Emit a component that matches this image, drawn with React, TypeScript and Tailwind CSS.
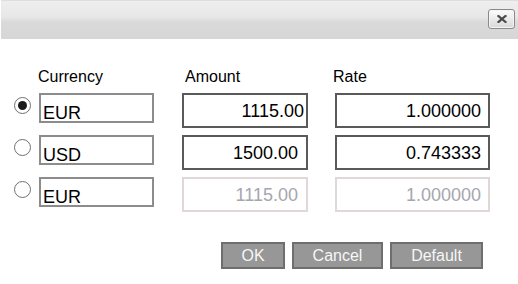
import React from "react";

const font = { fontFamily: '"Liberation Sans", Arial, sans-serif' };

function Radio({ checked }: { checked?: boolean }) {
  return (
    <div className="mt-[4px] flex h-[17px] w-[17px] shrink-0 items-center justify-center rounded-full border border-[#707070] bg-white">
      {checked && <div className="h-[9px] w-[9px] rounded-full bg-[#1a1a1a]" />}
    </div>
  );
}

function Currency({ value }: { value: string }) {
  return (
    <div className="box-border h-[30px] w-[115px] shrink-0 border-2 border-[#8c8c8c] pl-[2px] pt-[9px] text-[18px] leading-[18px] text-black">
      {value}
    </div>
  );
}

function Num({
  value,
  w,
  pr,
  disabled,
}: {
  value: string;
  w: string;
  pr: string;
  disabled?: boolean;
}) {
  return (
    <div
      className={`box-border flex h-[35px] shrink-0 items-center justify-end border-2 pt-px text-[18px] leading-[18px] ${w} ${pr} ${
        disabled ? "border-[#e0d8d8] text-[#a6a6ae]" : "border-[#5a5a5a] text-black"
      }`}
    >
      {value}
    </div>
  );
}

function Btn({ label, w }: { label: string; w: string }) {
  return (
    <button
      className={`box-border h-[27px] ${w} border-2 border-[#6e6e6e] bg-[#979797] text-[16px] leading-[16px] text-[#f6f6f6]`}
    >
      {label}
    </button>
  );
}

export default function App() {
  return (
    <div className="h-[284px] w-[518px] overflow-hidden bg-white" style={font}>
      <div className="ml-px flex h-[39px] items-start justify-end border-t border-[#dedede] bg-[linear-gradient(to_bottom,#eeeeee_0%,#e8e8e8_40%,#dadada_55%,#d6d6d6_100%)] pr-[3px] pt-[8px]">
        <button className="flex h-[20px] w-[27px] items-center justify-center rounded-[3px] border border-[#8a8a8a] bg-[linear-gradient(to_bottom,#fdfdfd,#d8d8d8)] shadow-[inset_0_0_0_1px_#f4f4f4]">
          <svg width="10" height="8" viewBox="0 0 10 8">
            <path d="M1.5 1 L8.5 7 M8.5 1 L1.5 7" stroke="#4a4a4a" strokeWidth="2.2" strokeLinecap="square" />
          </svg>
        </button>
      </div>

      <div className="pl-[14px] pt-[29px]">
        <div className="flex h-[18px] items-center text-[16px] leading-[18px] text-black">
          <div className="ml-[24px] w-[147px]">Currency</div>
          <div className="w-[148px]">Amount</div>
          <div>Rate</div>
        </div>

        <div className="mt-[7px] flex flex-col gap-[7px]">
          <div className="flex items-start">
            <Radio checked />
            <div className="ml-[8px]">
              <Currency value="EUR" />
            </div>
            <div className="ml-[28px]">
              <Num value="1115.00" w="w-[126px]" pr="pr-[2px]" />
            </div>
            <div className="ml-[27px]">
              <Num value="1.000000" w="w-[155px]" pr="pr-[7px]" />
            </div>
          </div>
          <div className="flex items-start">
            <Radio />
            <div className="ml-[8px]">
              <Currency value="USD" />
            </div>
            <div className="ml-[28px]">
              <Num value="1500.00" w="w-[126px]" pr="pr-[8px]" />
            </div>
            <div className="ml-[27px]">
              <Num value="0.743333" w="w-[155px]" pr="pr-[7px]" />
            </div>
          </div>
          <div className="flex items-start">
            <Radio />
            <div className="ml-[8px]">
              <Currency value="EUR" />
            </div>
            <div className="ml-[28px]">
              <Num value="1115.00" w="w-[126px]" pr="pr-[8px]" disabled />
            </div>
            <div className="ml-[27px]">
              <Num value="1.000000" w="w-[155px]" pr="pr-[7px]" disabled />
            </div>
          </div>
        </div>
      </div>

      <div className="mt-[30px] flex justify-end gap-[7px] pr-[35px]">
        <Btn label="OK" w="w-[64px]" />
        <Btn label="Cancel" w="w-[91px]" />
        <Btn label="Default" w="w-[93px]" />
      </div>
    </div>
  );
}
